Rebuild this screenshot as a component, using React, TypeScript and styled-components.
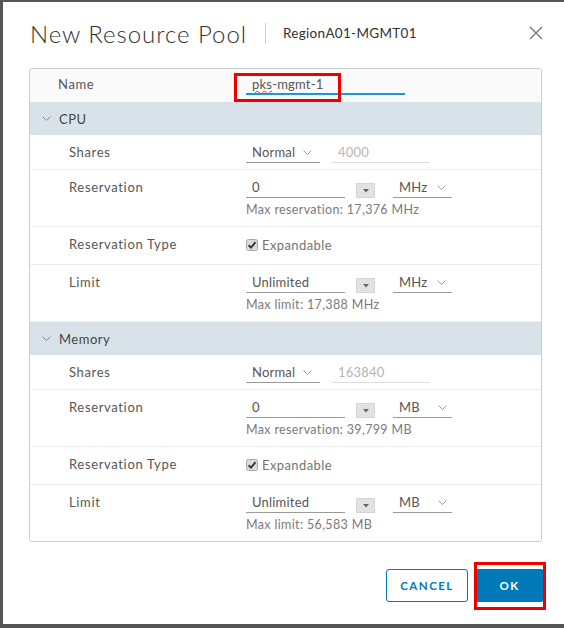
import React from "react";
import styled, { createGlobalStyle } from "styled-components";

const Global = createGlobalStyle`
  html, body { margin: 0; padding: 0; background: #555555; }
  body { font-family: Lato, "Open Sans", sans-serif; }
  * { box-sizing: border-box; }
`;

const Frame = styled.div`
  width: 564px;
  height: 628px;
  padding: 2px 0 4px 3px;
  background: #555555;
`;

const Dialog = styled.div`
  background: #ffffff;
  height: 622px;
  padding: 0 22px 0 26px;
  display: flex;
  flex-direction: column;
`;

const Header = styled.div`
  height: 66px;
  display: flex;
  align-items: center;
  padding-bottom: 4px;
`;

const Title = styled.h1`
  margin: 0;
  padding-left: 1px;
  font-family: Lato, sans-serif;
  font-weight: 300;
  font-size: 24px;
  color: #313131;
  letter-spacing: 0.95px;
`;

const Divider = styled.span`
  width: 1px;
  height: 21px;
  background: #cccccc;
  margin: 0 17px 0 18px;
`;

const Context = styled.span`
  font-size: 13.5px;
  color: #313131;
  letter-spacing: 0.3px;
`;

const CloseBtn = styled.button`
  margin-left: auto;
  margin-right: -1px;
  border: none;
  background: none;
  padding: 0;
  width: 14px;
  height: 14px;
  display: flex;
`;

const Panel = styled.div`
  border: 1px solid #cccccc;
  border-radius: 3px;
  overflow: hidden;
`;

const Row = styled.div<{ $pt?: number; $pb?: number; $bg?: string; $last?: boolean }>`
  display: grid;
  grid-template-columns: 216px 1fr;
  padding-top: ${(p) => p.$pt ?? 7}px;
  padding-bottom: ${(p) => p.$pb ?? 6}px;
  background: ${(p) => p.$bg ?? "#ffffff"};
  border-bottom: ${(p) => (p.$last ? "none" : "1px solid #eeeeee")};
`;

const Label = styled.div<{ $indent: number }>`
  padding-left: ${(p) => p.$indent}px;
  font-size: 13px;
  line-height: 21px;
  color: #565656;
  letter-spacing: 0.65px;
`;

const SectionHeader = styled.div`
  height: 33px;
  background: #d8e3e9;
  display: flex;
  align-items: center;
  padding-left: 12px;
  gap: 8px;
  font-size: 13px;
  color: #454545;
  letter-spacing: 0.5px;
`;

const Cell = styled.div`
  display: flex;
  flex-direction: column;
`;

const Controls = styled.div`
  display: flex;
  align-items: flex-end;
  height: 21px;
`;

const Select = styled.div<{ $w: number; $gap: number }>`
  width: ${(p) => p.$w}px;
  height: 21px;
  display: flex;
  align-items: center;
  gap: ${(p) => p.$gap}px;
  padding-left: 6px;
  border-bottom: 1px solid #9a9a9a;
  font-size: 13px;
  color: #565656;
  letter-spacing: 0.2px;
`;

const Input = styled.div<{ $w: number; $disabled?: boolean; $focus?: boolean }>`
  position: relative;
  width: ${(p) => p.$w}px;
  height: 21px;
  display: flex;
  align-items: center;
  padding-left: 6px;
  border-bottom: ${(p) =>
    p.$focus ? "2px solid #1a98d5" : p.$disabled ? "1px solid #dddddd" : "1px solid #9a9a9a"};
  font-size: 13px;
  letter-spacing: 0.2px;
  color: ${(p) => (p.$disabled ? "#b5b5b5" : "#565656")};
`;

const Spin = styled.div`
  width: 19px;
  height: 15px;
  margin-left: 11px;
  margin-right: 18px;
  background: #e2e2e2;
  border: 1px solid #d4d4d4;
  display: flex;
  align-items: center;
  justify-content: center;
`;

const Help = styled.div`
  margin-top: 4px;
  font-size: 12.5px;
  line-height: 16px;
  color: #7a7a7a;
  letter-spacing: 0.35px;
`;

const Check = styled.div`
  display: flex;
  align-items: center;
  gap: 4px;
  height: 21px;
  font-size: 13px;
  color: #757575;
  letter-spacing: 0.4px;
`;

const Spell = styled.span`
  text-decoration: underline wavy #e23b3b;
  text-decoration-thickness: 1px;
  text-underline-offset: 1px;
`;

const Annot = styled.span<{ $l: number; $t: number; $w: number; $h: number }>`
  position: absolute;
  left: ${(p) => p.$l}px;
  top: ${(p) => p.$t}px;
  width: ${(p) => p.$w}px;
  height: ${(p) => p.$h}px;
  border: 3px solid #ee0000;
  pointer-events: none;
`;

const Footer = styled.div`
  display: flex;
  justify-content: flex-end;
  gap: 7px;
  padding-top: 27px;
  margin-right: -2px;
`;

const Button = styled.button<{ $primary?: boolean; $w: number }>`
  position: relative;
  width: ${(p) => p.$w}px;
  height: 33px;
  border-radius: 3px;
  border: 1px solid #0079b8;
  background: ${(p) => (p.$primary ? "#0079b8" : "#ffffff")};
  color: ${(p) => (p.$primary ? "#ffffff" : "#0079b8")};
  font-family: Lato, sans-serif;
  font-weight: 700;
  font-size: 11.5px;
  letter-spacing: 1.5px;
  padding: 0;
`;

const Chevron = ({ color = "#9a9a9a" }: { color?: string }) => (
  <svg width="9" height="5" viewBox="0 0 9 5">
    <path d="M0.5 0.5 L4.5 4.5 L8.5 0.5" fill="none" stroke={color} strokeWidth="1" />
  </svg>
);

const SpinBtn = () => (
  <Spin>
    <svg width="6" height="4" viewBox="0 0 6 4">
      <path d="M0 0 L6 0 L3 3.5 Z" fill="#666" />
    </svg>
  </Spin>
);

const CheckBox = () => (
  <svg width="12" height="12" viewBox="0 0 12 12">
    <rect x="0.5" y="0.5" width="11" height="11" rx="2" fill="#dcdcdc" stroke="#a8a8a8" />
    <path d="M2.6 6.2 L5 8.6 L9.5 3.2" fill="none" stroke="#3a3a3a" strokeWidth="2" />
  </svg>
);

type Section = {
  name: string;
  sharesValue: string;
  unit: string;
  maxRes: string;
  maxLimit: string;
};

const sections: Section[] = [
  { name: "CPU", sharesValue: "4000", unit: "MHz", maxRes: "Max reservation: 17,376 MHz", maxLimit: "Max limit: 17,388 MHz" },
  { name: "Memory", sharesValue: "163840", unit: "MB", maxRes: "Max reservation: 39,799 MB", maxLimit: "Max limit: 56,583 MB" },
];

const ValueRow = ({ value, unit, help }: { value: string; unit: string; help: string }) => (
  <Cell>
    <Controls>
      <Input $w={99}>{value}</Input>
      <SpinBtn />
      <Select $w={59} $gap={unit === "MB" ? 18 : 10}>
        {unit}
        <Chevron />
      </Select>
    </Controls>
    <Help>{help}</Help>
  </Cell>
);

export default function App() {
  return (
    <>
      <Global />
      <Frame>
        <Dialog>
          <Header>
            <Title>New Resource Pool</Title>
            <Divider />
            <Context>RegionA01-MGMT01</Context>
            <CloseBtn aria-label="Close">
              <svg width="14" height="14" viewBox="0 0 14 14">
                <path d="M1 1 L13 13 M13 1 L1 13" stroke="#747474" strokeWidth="1.3" fill="none" />
              </svg>
            </CloseBtn>
          </Header>

          <Panel>
            <Row $pt={5} $pb={7} $bg="#fafafa" $last>
              <Label $indent={28}>Name</Label>
              <Controls>
                <Input $w={159} $focus>
                  <span>
                    <Spell>pks</Spell>-mgmt-1
                  </span>
                  <Annot $l={-12} $t={-1} $w={107} $h={29} />
                </Input>
              </Controls>
            </Row>

            {sections.map((s, si) => (
              <React.Fragment key={s.name}>
                <SectionHeader>
                  <Chevron color="#8a8a8a" />
                  {s.name}
                </SectionHeader>
                <Row>
                  <Label $indent={39}>Shares</Label>
                  <Controls>
                    <Select $w={74} $gap={8}>
                      Normal
                      <Chevron />
                    </Select>
                    <Input $w={98} $disabled style={{ marginLeft: 12 }}>
                      {s.sharesValue}
                    </Input>
                  </Controls>
                </Row>
                <Row $pb={8}>
                  <Label $indent={39}>Reservation</Label>
                  <ValueRow value="0" unit={s.unit} help={s.maxRes} />
                </Row>
                <Row $pb={9}>
                  <Label $indent={39}>Reservation Type</Label>
                  <Check>
                    <CheckBox />
                    Expandable
                  </Check>
                </Row>
                <Row $pb={8} $last={si === sections.length - 1}>
                  <Label $indent={39}>Limit</Label>
                  <ValueRow value="Unlimited" unit={s.unit} help={s.maxLimit} />
                </Row>
              </React.Fragment>
            ))}
          </Panel>

          <Footer>
            <Button $w={82}>CANCEL</Button>
            <Button $w={69} $primary>
              OK
              <Annot $l={-2} $t={-8} $w={72} $h={48} />
            </Button>
          </Footer>
        </Dialog>
      </Frame>
    </>
  );
}
